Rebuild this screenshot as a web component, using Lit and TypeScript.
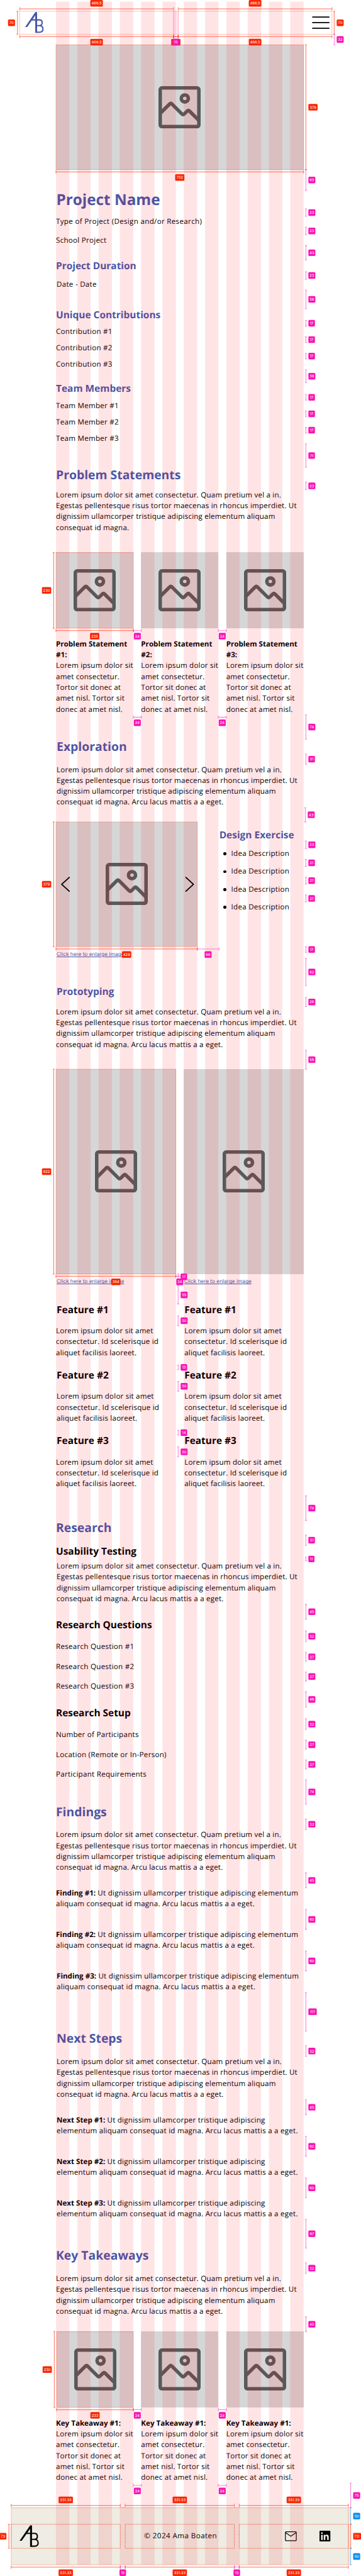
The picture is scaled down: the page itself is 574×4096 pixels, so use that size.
import { LitElement, html, css, svg, nothing } from "lit";
import type { TemplateResult } from "lit";

/* ---------- shared copy ---------- */
const LOREM = [
  "Lorem ipsum dolor sit amet consectetur. Quam pretium vel a in.",
  "Egestas pellentesque risus tortor maecenas in rhoncus imperdiet. Ut",
  "dignissim ullamcorper tristique adipiscing elementum aliquam",
];
const LOREM_SHORT = [...LOREM, "consequat id magna."];
const LOREM_LONG = [...LOREM, "consequat id magna. Arcu lacus mattis a a eget."];
const CARD = ["Lorem ipsum dolor sit", "amet consectetur.", "Tortor sit donec at", "amet nisl. Tortor sit", "donec at amet nisl."];
const FEATURE = ["Lorem ipsum dolor sit amet", "consectetur. Id scelerisque id", "aliquet facilisis laoreet."];

/* ---------- redline data ---------- */
type Tone = "red" | "pink" | "blue";
interface Mark { tone: Tone; dir: "v" | "h"; at: number; from: number; to: number; label?: string; side?: -1 | 1; }
const v = (tone: Tone, at: number, from: number, to: number, label?: string, side: -1 | 1 = 1): Mark => ({ tone, dir: "v", at, from, to, label, side });
const h = (tone: Tone, at: number, from: number, to: number, label?: string, side: -1 | 1 = 1): Mark => ({ tone, dir: "h", at, from, to, label, side });

const GAPS: [number, number, string][] = [
  [515, 578, "63"], [634, 657, "23"], [690, 713, "23"], [746, 789, "43"], [825, 848, "23"], [881, 937, "56"],
  [973, 990, "17"], [1023, 1040, "17"], [1073, 1090, "17"], [1123, 1162, "39"], [1198, 1215, "17"], [1248, 1265, "17"],
  [1298, 1315, "17"], [1348, 1419, "71"], [1464, 1487, "23"], [2171, 2245, "74"], [2290, 2321, "31"],
  [2554, 2577, "23"], [2610, 2631, "21"], [2664, 2685, "21"], [2718, 2739, "21"], [2875, 2892, "17"], [2911, 2993, "82"],
  [3029, 3057, "28"], [3189, 3247, "58"], [4543, 4617, "74"], [4662, 4693, "31"], [4729, 4740, "11"], [4872, 4917, "45"],
  [4953, 4985, "32"], [5018, 5045, "27"], [5078, 5105, "27"], [5138, 5184, "46"], [5220, 5252, "32"], [5285, 5312, "27"],
  [5345, 5372, "27"], [5405, 5479, "74"], [5524, 5556, "32"], [5688, 5733, "45"], [5799, 5859, "60"], [5925, 5985, "60"],
  [6051, 6168, "117"], [6213, 6245, "32"], [6377, 6422, "45"], [6488, 6548, "60"], [6614, 6674, "60"], [6740, 6827, "87"],
  [6872, 6904, "32"], [7036, 7081, "45"],
];

const MARKS: Mark[] = [
  h("red", 27, 60, 526.5, "466.5", -1), h("red", 27, 541.5, 1008, "466.5", -1),
  h("red", 111, 60, 526.5, "466.5"), h("red", 111, 541.5, 1008, "466.5"),
  h("red", 111, 526.5, 541.5, "466"), h("pink", 111, 528, 540, "15"),
  v("red", 53, 34, 104, "70", -1), v("red", 1015, 34, 104, "70"), v("pink", 1015, 104, 136, "32"),
  v("red", 929, 136, 515, "379"), h("red", 522, 170, 922, "752"),
  ...GAPS.map(([a, b, t]) => v("pink", 929, a, b, t)),
  v("pink", 927, 2453, 2496, "43"),
  v("red", 163, 1678, 1908, "230", -1), h("red", 1915, 170, 405, "235"),
  h("pink", 1915, 405, 429, "24"), h("pink", 1915, 663, 687, "24"),
  h("pink", 2178, 405, 429, "24"), h("pink", 2178, 663, 687, "24"),
  v("red", 163, 2496, 2875, "379", -1), h("red", 2882, 170, 599, "429"), h("pink", 2882, 599, 665, "66"),
  v("red", 163, 3247, 3869, "622", -1), h("red", 3876, 170, 534, "364"), h("pink", 3876, 534, 558, "24"),
  v("pink", 541, 3869, 3886, "17"), v("pink", 541, 3905, 3960, "55"), v("pink", 541, 3996, 4026, "30"),
  v("pink", 541, 4146, 4159, "13"), v("pink", 541, 4195, 4225, "30"), v("pink", 541, 4344, 4358, "14"), v("pink", 541, 4394, 4424, "30"),
  v("red", 165, 7081, 7311, "230", -1), h("red", 7318, 172, 405, "233"),
  h("pink", 7318, 405, 429, "24"), h("pink", 7318, 663, 687, "24"),
  h("pink", 7548, 405, 429, "24"), h("pink", 7548, 663, 687, "24"),
  h("red", 7609, 34, 365.3, "331.33", -1), h("red", 7609, 380.3, 711.6, "331.33", -1), h("red", 7609, 726.6, 1058, "331.33", -1),
  h("red", 7796, 34, 365.3, "331.33"), h("red", 7796, 380.3, 711.6, "331.33"), h("red", 7796, 726.6, 1058, "331.33"),
  h("pink", 7796, 365.3, 380.3, "15"), h("pink", 7796, 711.6, 726.6, "15"),
  v("red", 27, 7666, 7739, "73", -1),
  v("pink", 1065, 7541, 7616, "75"), v("blue", 1065, 7616, 7666, "50"), v("red", 1065, 7666, 7739, "73:"), v("blue", 1065, 7739, 7789, "50"),
];

/* outlined frames: x, y, width, height, dotted */
const FRAMES: [number, number, number, number, boolean][] = [
  [60, 34, 948, 70, false], [170, 136, 752, 379, false], [170, 1678, 235, 230, false], [170, 2496, 429, 379, false],
  [170, 3247, 364, 622, false], [172, 7081, 233, 230, false], [34, 7616, 1024, 173, false],
  [34, 7666, 331.3, 73, true], [380.3, 7666, 331.3, 73, true], [726.6, 7666, 331.3, 73, true],
];

const labelWidth = (t: string) => 7.4 + [...t].reduce((w, c) => w + (c === "." || c === ":" ? 3 : c === "1" ? 5.6 : 6.9), 0);

class RedlineOverlay extends LitElement {
  static styles = css`
    :host { display: block; }
    svg { display: block; width: 1097px; height: 7823px; }
    .line { stroke-width: 2.4; fill: none; opacity: 0.55; }
    .line.red { stroke: #ff2a00; }
    .line.pink { stroke: #ff14b8; stroke-width: 2; }
    .line.blue { stroke: #0d8cef; stroke-width: 2; }
    .line.thin { stroke-width: 1; }
    .tag.red { fill: #f92600; }
    .tag.pink { fill: #f914b2; }
    .tag.blue { fill: #0c8ceb; }
    .num { font: 400 11.2px Inter, sans-serif; fill: #fff; text-anchor: middle; text-rendering: geometricPrecision; }
    .frame { fill: none; stroke: #ff2a00; stroke-width: 2; opacity: 0.28; }
    .dotted { stroke-dasharray: 1.6 1.6; opacity: 0.75; }
    .column { fill: #ff0010; opacity: 0.105; }
    .gutter { fill: #ff14b8; opacity: 0.12; }
  `;

  private mark(m: Mark) {
    const { at, from, to, tone } = m;
    const d = m.dir === "v"
      ? `M${at} ${from}V${to}M${at - 3} ${from}H${at + 3}M${at - 3} ${to}H${at + 3}`
      : `M${from} ${at}H${to}M${from} ${at - 5}V${at + 5}M${to} ${at - 5}V${at + 5}`;
    return svg`<path class="line ${tone}" d=${d} />`;
  }

  private tag(m: Mark) {
    if (!m.label) return nothing;
    const w = labelWidth(m.label);
    const mid = (m.from + m.to) / 2;
    const s = m.side ?? 1;
    const cx = m.dir === "v" ? m.at + s * (7.5 + w / 2) : mid;
    const cy = m.dir === "v" ? mid : m.at + s * 17;
    return svg`<rect class="tag ${m.tone}" x=${cx - w / 2} y=${cy - 10} width=${w} height="20" rx="3" />
      <text class="num" x=${cx} y=${cy + 4.1}>${m.label}</text>`;
  }

  render() {
    return html`<svg viewBox="0 0 1097 7823">
      ${Array.from({ length: 12 }, (_, i) => svg`<rect class="column" x=${170 + i * 64.67} y="5" width="40.67" height="7784" />`)}
      <rect class="gutter" x="526.5" y="34" width="15" height="70" />
      <path class="line red thin" d="M526.5 34V104M541.5 34V104" />
      ${FRAMES.map(([x, y, w, ht, dot]) => svg`<rect class="frame ${dot ? "dotted" : ""}" x=${x} y=${y} width=${w} height=${ht} />`)}
      ${MARKS.map((m) => this.mark(m))}
      ${MARKS.map((m) => this.tag(m))}
    </svg>`;
  }
}
customElements.define("redline-overlay", RedlineOverlay);

/* ---------- image placeholder ---------- */
class ImageSlot extends LitElement {
  static styles = css`
    :host { display: flex; align-items: center; justify-content: center; background: #d6d6d6; }
    svg { width: 128px; height: 128px; fill: none; stroke: #595959; stroke-width: 2; }
  `;
  render() {
    return html`<svg viewBox="0 0 24 24">
      <rect x="1" y="1" width="22" height="22" rx="1" />
      <circle cx="15" cy="7" r="2" />
      <path d="M1 15.5 6.3 10.2Q7 9.5 7.7 10.2L13.3 15.8Q14 16.5 14.7 15.8L16.3 14.2Q17 13.5 17.7 14.2L23 19.5" />
    </svg>`;
  }
}
customElements.define("image-slot", ImageSlot);

const logo = html`<svg class="logo" viewBox="0 0 70 70">
  <path class="solid" d="M5.7 47.8 36.6 2.6H42V65.3H36.3V12.7L12 47.8Z" />
  <path class="stroke" d="M26 26H49C55 26 57.5 30 57.5 34.6 57.5 40 54 43.5 48 43.5H41M48 43.5C56 43.5 59.8 48 59.8 53.5 59.8 60 56 63.4 49 63.4H41" />
</svg>`;

const lines = (ls: string[]) => ls.map((l, i) => html`${i ? html`<br />` : nothing}${l}`);
const gap = (g: number) => `margin-top:${g}px`;
const title = (g: number, t: string) => html`<h1 style=${gap(g)}>${t}</h1>`;
const head = (g: number, t: string, cls = "") => html`<h2 class=${cls} style=${gap(g)}>${t}</h2>`;
const sub = (g: number, t: string, cls = "") => html`<h3 class=${cls} style=${gap(g)}>${t}</h3>`;
const para = (g: number, c: string[], cls = "") => html`<p class="${cls} ${c.length === 1 ? "single" : ""}" style=${gap(g)}>${lines(c)}</p>`;
const item = (g: number, lead: string, c: string[], cls = "") => html`<p class=${cls} style=${gap(g)}><b>${lead}</b> ${lines(c)}</p>`;

class AppRoot extends LitElement {
  static styles = css`
    :host { display: block; width: 574px; height: 4096px; overflow: hidden; background: #fff; }
    * { box-sizing: border-box; }
    .page {
      position: relative; zoom: 0.52358; width: 1097px; height: 7823px; padding: 34px 34px 0; background: #fff;
      color: #000; font-family: "Open Sans", sans-serif; text-rendering: geometricPrecision;
    }
    redline-overlay { position: absolute; top: 0; left: 0; }
    h1, h2, h3, p, ul { margin: 0; padding: 0; white-space: nowrap; }
    h1, h2, h3 { font-weight: 700; color: #4858a8; }
    h1 { font-size: 46.4px; line-height: 56px; padding-left: 1px; }
    h2 { font-size: 37px; line-height: 45px; }
    h3 { font-size: 29.5px; line-height: 36px; }
    h3.dark { color: #000; }
    p, li { font-size: 22.2px; line-height: 33px; letter-spacing: 0.36px; }
    main p { padding-top: 1px; margin-bottom: -1px; }
    .single, li { letter-spacing: 0.5px; }
    p.wide { letter-spacing: 0.6px; }
    p.step { letter-spacing: 0.44px; }
    b { font-weight: 700; letter-spacing: 0; }
    .in { padding-left: 2px; }
    header { display: flex; justify-content: space-between; align-items: center; height: 70px; margin: 0 51px 0 26px; padding: 0 11px 0 10px; }
    header .logo { width: 70px; height: 70px; }
    .logo .solid { fill: #4858a8; }
    .logo .stroke { fill: none; stroke: #4858a8; stroke-width: 3.9; }
    .menu { width: 54px; height: 38px; stroke: #000; stroke-width: 3.2; stroke-linecap: round; }
    main { display: block; width: 752px; margin: 32px 0 0 136px; }
    .hero { height: 379px; }
    .cards { display: grid; grid-template-columns: repeat(3, 235px); column-gap: 23.5px; }
    .cards image-slot { height: 230px; }
    .cards .inset { margin-left: 2px; }
    .cards p { margin-top: 31.5px; }
    .explore { display: grid; grid-template-columns: 429px 1fr; column-gap: 67px; margin-top: 43px; }
    .carousel { display: grid; }
    .carousel > * { grid-area: 1 / 1; }
    .carousel image-slot { height: 379px; }
    .arrows { display: flex; justify-content: space-between; align-items: center; padding: 0 7px 0 13px; z-index: 1; }
    .arrows svg { width: 30px; height: 50px; fill: none; stroke: #000; stroke-width: 3.6; stroke-linecap: round; stroke-linejoin: round; }
    ul { list-style: none; display: grid; row-gap: 21px; margin-top: 23px; }
    li { display: flex; align-items: center; gap: 14px; padding-left: 13px; }
    li::before { content: ""; width: 9px; height: 9px; border-radius: 50%; background: #000; }
    .exercise { padding-top: 22px; }
    .link {
      display: block; width: max-content; margin-top: 17px; margin-left: 2px; font: 400 15.9px/19px Inter, sans-serif; color: #4858a8;
      text-decoration: underline; text-decoration-thickness: 1.6px; text-underline-offset: 2.5px; white-space: nowrap;
    }
    .protos { display: grid; grid-template-columns: 364px 364px; column-gap: 24px; }
    .protos image-slot { height: 622px; }
    .protos h3 { padding-left: 2px; }
    .protos .feature { height: 120.5px; }
    .right .feature { padding-left: 2px; }
    .right .link { margin-left: 1px; }
    footer { display: grid; grid-template-columns: repeat(3, 1fr); column-gap: 15px; height: 173px; margin-top: 75.5px; padding: 50px 0; background: #eeece3; }
    footer > div { display: flex; align-items: center; height: 73px; }
    footer .logo { width: 73px; height: 73px; margin-left: 20px; }
    footer .logo .solid { fill: #040807; }
    footer .logo .stroke { stroke: #040807; }
    .copy { justify-content: center; }
    .copy p { letter-spacing: 0.82px; }
    .social { padding-left: 135px; gap: 70px; }
    .mail { width: 36px; height: 30px; fill: none; stroke: #0a0504; stroke-width: 2.4; stroke-linejoin: round; }
    .linkedin { width: 33px; height: 33px; fill: #000; }
  `;

  private cards(names: string[][], inset: boolean): TemplateResult {
    return html`${names.map((n, i) => html`<div>
      <image-slot class=${inset && i === 0 ? "inset" : ""}></image-slot>
      <p><b>${lines(n)}</b><br />${lines(CARD)}</p>
    </div>`)}`;
  }

  private proto(right: boolean) {
    return html`<div class=${right ? "right" : ""}>
      <image-slot></image-slot>
      <a class="link">Click here to enlarge image</a>
      ${[1, 2, 3].map((n) => html`${sub(n === 1 ? 54.5 : 13.7, `Feature #${n}`, "dark")}
        ${para(30, FEATURE, `feature ${n === 2 ? "in" : ""}`)}`)}
    </div>`;
  }

  render() {
    return html`<div class="page">
      <header>
        ${logo}
        <svg class="menu" viewBox="0 0 54 38"><path d="M2 2H52M2 19H52M2 36H52" /></svg>
      </header>
      <main>
        <image-slot class="hero"></image-slot>
        ${title(63, "Project Name")}
        ${para(23, ["Type of Project (Design and/or Research)"], "wide")}
        ${para(23, ["School Project"])}
        ${sub(43, "Project Duration")}
        ${para(23, ["Date - Date"], "in")}
        ${sub(56, "Unique Contributions")}
        ${[1, 2, 3].map((n) => para(17, [`Contribution #${n}`]))}
        ${sub(39, "Team Members")}
        ${[1, 2, 3].map((n) => para(17, [`Team Member #${n}`]))}
        ${head(71, "Problem Statements")}
        ${para(23, LOREM_SHORT)}
        <div class="cards" style=${gap(59)}>${this.cards([1, 2, 3].map((n) => ["Problem Statement", `#${n}:`]), false)}</div>

        ${head(74.5, "Exploration", "in")}
        ${para(31, LOREM_LONG, "in")}
        <div class="explore">
          <div class="carousel">
            <image-slot></image-slot>
            <div class="arrows">
              <svg viewBox="0 0 30 50"><path d="M27 4 4 25 27 46" /></svg>
              <svg viewBox="0 0 30 50"><path d="M3 4 26 25 3 46" /></svg>
            </div>
          </div>
          <div class="exercise">
            ${sub(0, "Design Exercise")}
            <ul>${[1, 2, 3, 4].map(() => html`<li>Idea Description</li>`)}</ul>
          </div>
        </div>
        <a class="link">Click here to enlarge image</a>

        ${sub(82, "Prototyping", "in")}
        ${para(28, LOREM_LONG)}
        <div class="protos" style=${gap(58)}>${this.proto(false)}${this.proto(true)}</div>

        ${head(74, "Research")}
        ${sub(31, "Usability Testing", "dark")}
        ${para(11, LOREM_LONG, "in")}
        ${sub(45, "Research Questions", "dark")}
        ${[1, 2, 3].map((n) => para(n === 1 ? 32 : 27, [`Research Question #${n}`]))}
        ${sub(46, "Research Setup", "dark")}
        ${["Number of Participants", "Location (Remote or In-Person)", "Participant Requirements"].map((t, i) => para(i ? 27 : 32, [t]))}

        ${head(74, "Findings")}
        ${para(32, LOREM_LONG)}
        ${[1, 2, 3].map((n) => item(n === 1 ? 45 : 60, `Finding #${n}:`,
          ["Ut dignissim ullamcorper tristique adipiscing elementum", "aliquam consequat id magna. Arcu lacus mattis a a eget."], n === 3 ? "step in" : "step"))}

        ${head(117, "Next Steps", "in")}
        ${para(32, LOREM_LONG, "in")}
        ${[1, 2, 3].map((n) => item(n === 1 ? 45 : 60, `Next Step #${n}:`,
          ["Ut dignissim ullamcorper tristique adipiscing", "elementum aliquam consequat id magna. Arcu lacus mattis a a eget."], "step in"))}

        ${head(87, "Key Takeaways")}
        ${para(32, LOREM_LONG)}
        <div class="cards" style=${gap(45)}>${this.cards([1, 2, 3].map(() => ["Key Takeaway #1:"]), true)}</div>
      </main>
      <footer>
        <div>${logo}</div>
        <div class="copy"><p>© 2024 Ama Boaten</p></div>
        <div class="social">
          <svg class="mail" viewBox="0 0 36 30"><rect x="1.4" y="1.4" width="33.2" height="27.2" rx="2.4" /><path d="M1.8 4 18 15 34.2 4" /></svg>
          <svg class="linkedin" viewBox="0 0 24 24"><path d="M20.447 20.452h-3.554v-5.569c0-1.328-.027-3.037-1.852-3.037-1.853 0-2.136 1.445-2.136 2.939v5.667H9.351V9h3.414v1.561h.046c.477-.9 1.637-1.85 3.37-1.85 3.601 0 4.267 2.37 4.267 5.455v6.286zM5.337 7.433c-1.144 0-2.063-.926-2.063-2.065 0-1.138.92-2.063 2.063-2.063 1.14 0 2.064.925 2.064 2.063 0 1.139-.925 2.065-2.064 2.065zm1.782 13.019H3.555V9h3.564v11.452zM22.225 0H1.771C.792 0 0 .774 0 1.729v20.542C0 23.227.792 24 1.771 24h20.451C23.2 24 24 23.227 24 22.271V1.729C24 .774 23.2 0 22.222 0h.003z" /></svg>
        </div>
      </footer>
      <redline-overlay></redline-overlay>
    </div>`;
  }
}
customElements.define("app-root", AppRoot);
